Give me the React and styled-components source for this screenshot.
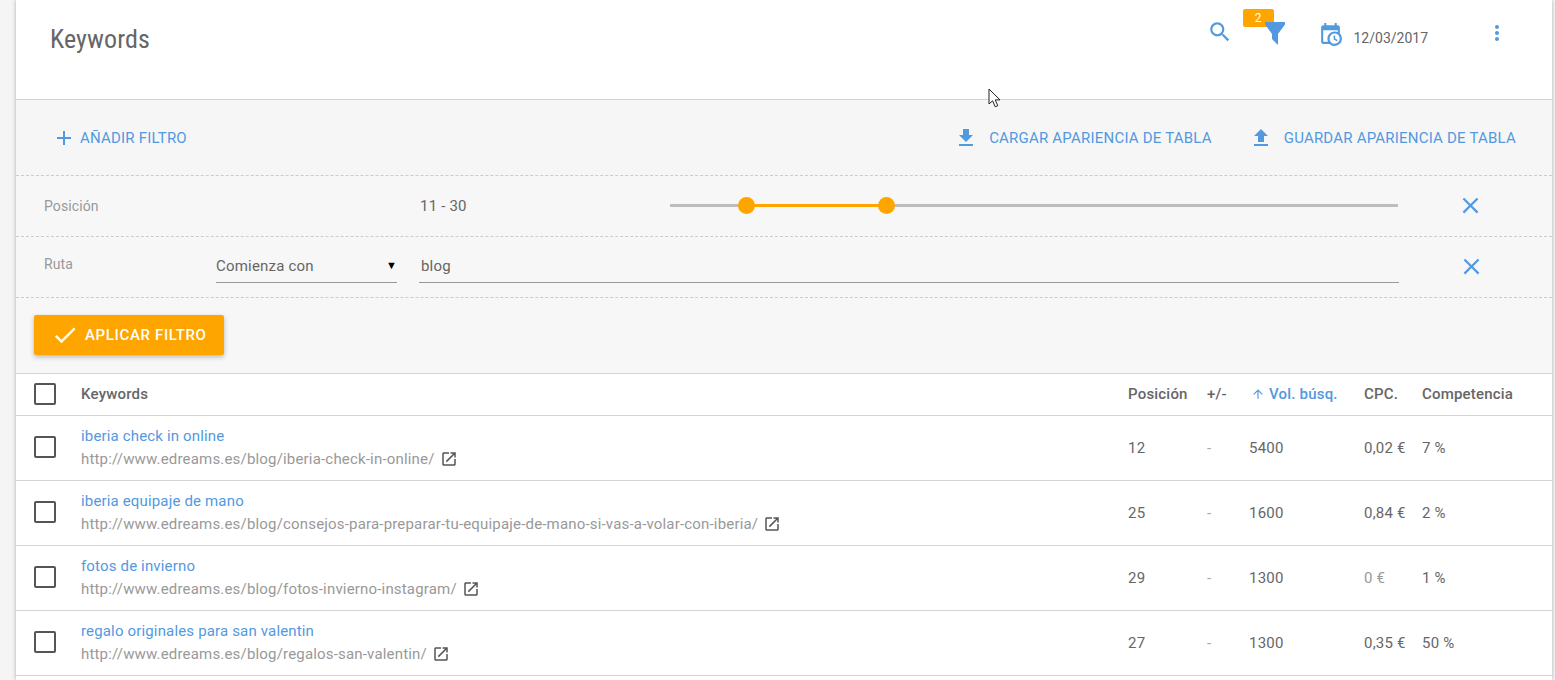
import React from 'react'
import styled, { createGlobalStyle } from 'styled-components'

const BLUE = '#5299e0'
const ORANGE = '#ffa500'

const paths = {
  search: 'M15.5 14h-.79l-.28-.27C15.41 12.59 16 11.11 16 9.5 16 5.91 13.09 3 9.5 3S3 5.91 3 9.5 5.91 16 9.5 16c1.61 0 3.09-.59 4.23-1.57l.27.28v.79l5 4.99L20.49 19l-4.99-5zm-6 0C7.01 14 5 11.99 5 9.5S7.01 5 9.5 5 14 7.01 14 9.5 11.99 14 9.5 14z',
  calendar: 'M15,13H16.5V15.82L18.94,17.23L18.19,18.53L15,16.69V13M19,8H5V19H9.67C9.24,18.09 9,17.07 9,16A7,7 0 0,1 16,9C17.07,9 18.09,9.24 19,9.67V8M5,21C3.89,21 3,20.1 3,19V5C3,3.89 3.89,3 5,3H6V1H8V3H16V1H18V3H19A2,2 0 0,1 21,5V11.1C22.24,12.36 23,14.09 23,16A7,7 0 0,1 16,23C14.09,23 12.36,22.24 11.1,21H5M16,11.15A4.85,4.85 0 0,0 11.15,16C11.15,18.68 13.32,20.85 16,20.85A4.85,4.85 0 0,0 20.85,16C20.85,13.32 18.68,11.15 16,11.15Z',
  more: 'M12 8c1.1 0 2-.9 2-2s-.9-2-2-2-2 .9-2 2 .9 2 2 2zm0 2c-1.1 0-2 .9-2 2s.9 2 2 2 2-.9 2-2-.9-2-2-2zm0 6c-1.1 0-2 .9-2 2s.9 2 2 2 2-.9 2-2-.9-2-2-2z',
  add: 'M19 13h-6v6h-2v-6H5v-2h6V5h2v6h6v2z',
  download: 'M19 9h-4V3H9v6H5l7 7 7-7zM5 18v2h14v-2H5z',
  upload: 'M9 16h6v-6h4l-7-7-7 7h4zm-4 2h14v2H5z',
  close: 'M19 6.41L17.59 5 12 10.59 6.41 5 5 6.41 10.59 12 5 17.59 6.41 19 12 13.41 17.59 19 19 17.59 13.41 12z',
  check: 'M9 16.17L4.83 12l-1.42 1.41L9 19 21 7l-1.41-1.41z',
  open: 'M19 19H5V5h7V3H5c-1.11 0-2 .9-2 2v14c0 1.1.89 2 2 2h14c1.1 0 2-.9 2-2v-7h-2v7zM14 3v2h3.59l-9.83 9.83 1.41 1.41L19 6.41V10h2V3h-7z',
  up: 'M4 12l1.41 1.41L11 7.83V20h2V7.83l5.58 5.59L20 12l-8-8-8 8z',
}

const Icon = ({ name, size = 24, color = BLUE }) => (
  <svg width={size} height={size} viewBox="0 0 24 24" fill={color} style={{ display: 'block', flex: 'none' }}>
    <path d={paths[name]} />
  </svg>
)

const rows = [
  { keyword: 'iberia check in online', url: 'http://www.edreams.es/blog/iberia-check-in-online/', pos: 12, vol: 5400, cpc: '0,02 €', comp: '7 %' },
  { keyword: 'iberia equipaje de mano', url: 'http://www.edreams.es/blog/consejos-para-preparar-tu-equipaje-de-mano-si-vas-a-volar-con-iberia/', pos: 25, vol: 1600, cpc: '0,84 €', comp: '2 %' },
  { keyword: 'fotos de invierno', url: 'http://www.edreams.es/blog/fotos-invierno-instagram/', pos: 29, vol: 1300, cpc: '0 €', comp: '1 %', zero: true },
  { keyword: 'regalo originales para san valentin', url: 'http://www.edreams.es/blog/regalos-san-valentin/', pos: 27, vol: 1300, cpc: '0,35 €', comp: '50 %' },
]

export default function App() {
  return (
    <>
      <GlobalStyle />
      <Card>
        <Header>
          <Title>Keywords</Title>
          <HeaderActions>
            <SearchSlot><Icon name="search" size={26} /></SearchSlot>
            <FilterSlot>
              <Badge>2</Badge>
              <Funnel width="20" height="23" viewBox="0 0 20 23">
                <path d="M0 0h20v2.5L13 12v11l-6-6v-5L0 2.5z" fill={BLUE} />
              </Funnel>
            </FilterSlot>
            <CalendarSlot>
              <Icon name="calendar" size={25} />
              <DateText>12/03/2017</DateText>
            </CalendarSlot>
            <MoreSlot><Icon name="more" /></MoreSlot>
          </HeaderActions>
        </Header>

        <Toolbar>
          <AddButton><Icon name="add" size={24} />AÑADIR FILTRO</AddButton>
          <ToolbarRight>
            <ToolButton><Icon name="download" size={24} />CARGAR APARIENCIA DE TABLA</ToolButton>
            <ToolButton><Icon name="upload" size={24} />GUARDAR APARIENCIA DE TABLA</ToolButton>
          </ToolbarRight>
        </Toolbar>

        <FilterRow>
          <RangeLabel>Posición</RangeLabel>
          <RangeValue>11 - 30</RangeValue>
          <Slider>
            <SliderFill $from={10.44} $to={29.75} />
            <Thumb $at={10.44} />
            <Thumb $at={29.75} />
          </Slider>
          <CloseSlot><Icon name="close" size={27} /></CloseSlot>
        </FilterRow>

        <FilterRow>
          <RouteLabel>Ruta</RouteLabel>
          <Select>Comienza con<Caret>▼</Caret></Select>
          <TextField>blog</TextField>
          <CloseSlot><Icon name="close" size={27} /></CloseSlot>
        </FilterRow>

        <ApplyBar>
          <ApplyButton><Icon name="check" size={28} color="#fff" />APLICAR FILTRO</ApplyButton>
        </ApplyBar>

        <HeadRow>
          <CheckCell><Checkbox /></CheckCell>
          <span>Keywords</span>
          <span>Posición</span>
          <span>+/-</span>
          <SortedHead><Icon name="up" size={14} />Vol. búsq.</SortedHead>
          <span>CPC.</span>
          <span>Competencia</span>
        </HeadRow>

        {rows.map((row) => (
          <Row key={row.keyword}>
            <RowCheckCell><Checkbox /></RowCheckCell>
            <KeywordCell>
              <KeywordLink>{row.keyword}</KeywordLink>
              <UrlLine>{row.url}<Icon name="open" size={18} color="#555" /></UrlLine>
            </KeywordCell>
            <span>{row.pos}</span>
            <Dash>-</Dash>
            <Volume>{row.vol}</Volume>
            <Cpc $zero={row.zero}>{row.cpc}</Cpc>
            <span>{row.comp}</span>
          </Row>
        ))}
      </Card>

      <Cursor width="16" height="21" viewBox="0 0 16 21">
        <path d="M1 1v15l3.6-3.2 2.6 6 2.6-1.1-2.6-5.8H12z" fill="#fff" stroke="#222" strokeWidth="1" />
      </Cursor>
    </>
  )
}

const GlobalStyle = createGlobalStyle`
  html, body {
    margin: 0;
    height: 680px;
    overflow: hidden;
    background: #f5f5f5;
    font-family: Roboto, "Liberation Sans", sans-serif;
  }
`

const Card = styled.main`
  width: 1536px;
  height: 680px;
  margin-left: 16px;
  background: #fff;
  box-shadow: 0 0 4px rgba(0, 0, 0, 0.3);
  overflow: hidden;
  color: #666;
`

const Header = styled.header`
  height: 100px;
  box-sizing: border-box;
  border-bottom: 1px solid #d4d4d4;
  display: flex;
  justify-content: space-between;
  align-items: flex-start;
`

const Title = styled.h1`
  margin: 24px 0 0 34px;
  font-family: "Roboto Condensed", Roboto, sans-serif;
  font-stretch: 75%;
  font-size: 26px;
  letter-spacing: 0.12px;
  line-height: 30px;
  font-weight: 400;
  color: #666;
`

const HeaderActions = styled.div`
  display: flex;
  align-items: flex-start;
  padding: 19px 43px 0 0;
`

const SearchSlot = styled.div`
  margin-right: 32px;
`

const FilterSlot = styled.div`
  position: relative;
  margin: 3px 33px 0 0;
`

const Badge = styled.span`
  position: absolute;
  left: -22px;
  top: -13px;
  width: 31px;
  height: 18px;
  border-radius: 2px;
  background: ${ORANGE};
  color: #fff;
  font-size: 12px;
  line-height: 18px;
  text-align: center;
`

const Funnel = styled.svg`
  position: relative;
  display: block;
`

const CalendarSlot = styled.div`
  display: flex;
  align-items: center;
  gap: 11px;
  margin-right: 57px;
  padding-top: 1px;
`

const DateText = styled.span`
  font-size: 14px;
  line-height: 20px;
  margin-top: 8px;
  color: #666;
`

const MoreSlot = styled.div`
  margin-top: 2px;
`

const Toolbar = styled.div`
  height: 76px;
  box-sizing: border-box;
  background: #f6f6f6;
  border-bottom: 1px dashed #ccc;
  display: flex;
  justify-content: space-between;
  align-items: center;
  padding: 0 36px 0 36px;
`

const ToolbarRight = styled.div`
  display: flex;
  gap: 37px;
`

const AddButton = styled.div`
  display: flex;
  align-items: center;
  gap: 4px;
  color: ${BLUE};
  font-size: 15px;
  letter-spacing: 0.2px;
`

const ToolButton = styled.div`
  display: flex;
  align-items: center;
  gap: 11px;
  color: ${BLUE};
  font-size: 15px;
  letter-spacing: 0.21px;
`

const FilterRow = styled.div`
  height: 61px;
  box-sizing: border-box;
  background: #f7f7f7;
  border-bottom: 1px dashed #ccc;
  display: flex;
  align-items: center;
  padding-left: 28px;
`

const RangeLabel = styled.span`
  width: 376px;
  font-size: 14px;
  letter-spacing: 0.1px;
  color: #999;
`

const RangeValue = styled.span`
  width: 250px;
  font-size: 15px;
  letter-spacing: 0.2px;
  color: #666;
`

const Slider = styled.div`
  position: relative;
  width: 728px;
  height: 3px;
  margin-top: -2px;
  background: #bdbdbd;
`

const SliderFill = styled.div`
  position: absolute;
  top: 0;
  bottom: 0;
  left: ${(p) => p.$from}%;
  right: ${(p) => 100 - p.$to}%;
  background: ${ORANGE};
`

const Thumb = styled.div`
  position: absolute;
  top: -7px;
  left: ${(p) => p.$at}%;
  width: 17px;
  height: 17px;
  margin-left: -8.5px;
  border-radius: 50%;
  background: ${ORANGE};
`

const CloseSlot = styled.div`
  width: 144px;
  margin-top: -2px;
  display: flex;
  justify-content: center;
`

const RouteLabel = styled.span`
  width: 172px;
  font-size: 14px;
  letter-spacing: 0.1px;
  color: #999;
  margin-top: -7px;
`

const Select = styled.div`
  width: 181px;
  height: 31px;
  box-sizing: border-box;
  margin-right: 22px;
  padding-bottom: 2px;
  border-bottom: 1px solid #999;
  display: flex;
  justify-content: space-between;
  align-items: center;
  font-size: 15px;
  letter-spacing: 0.2px;
  color: #666;
`

const Caret = styled.span`
  font-size: 11px;
  color: #000;
`

const TextField = styled.div`
  width: 980px;
  height: 31px;
  box-sizing: border-box;
  padding: 0 0 2px 2px;
  border-bottom: 1px solid #999;
  display: flex;
  align-items: center;
  font-size: 15px;
  letter-spacing: 0.2px;
  color: #666;
`

const ApplyBar = styled.div`
  height: 76px;
  box-sizing: border-box;
  background: #f7f7f7;
  border-bottom: 1px solid #d4d4d4;
  padding: 17px 0 0 18px;
`

const ApplyButton = styled.div`
  width: 190px;
  height: 40px;
  box-sizing: border-box;
  padding-left: 17px;
  border-radius: 2px;
  background: ${ORANGE};
  box-shadow: 0 2px 5px rgba(0, 0, 0, 0.26);
  display: flex;
  align-items: center;
  gap: 6px;
  color: #fff;
  font-size: 15px;
  font-weight: 500;
  letter-spacing: 0.65px;
`

const columns = '65px 1047px 79px 44px 113px 58px 1fr'

const HeadRow = styled.div`
  height: 42px;
  box-sizing: border-box;
  padding-bottom: 2px;
  border-bottom: 1px solid #d4d4d4;
  display: grid;
  grid-template-columns: ${columns};
  align-items: center;
  font-size: 15px;
  font-weight: 500;
  letter-spacing: 0.2px;
  color: #666;
`

const SortedHead = styled.span`
  display: flex;
  align-items: center;
  gap: 4px;
  color: ${BLUE};
`

const Row = styled.div`
  height: 65px;
  box-sizing: border-box;
  border-bottom: 1px solid #d4d4d4;
  display: grid;
  grid-template-columns: ${columns};
  align-items: center;
  font-size: 15px;
  letter-spacing: 0.2px;
  color: #666;
`

const CheckCell = styled.div`
  padding-left: 18px;
`

const RowCheckCell = styled(CheckCell)`
  margin-top: -2px;
`

const Checkbox = styled.div`
  width: 22px;
  height: 22px;
  box-sizing: border-box;
  border: 2px solid #555;
  border-radius: 2px;
`

const KeywordCell = styled.div`
  display: flex;
  flex-direction: column;
  gap: 5px;
  margin-top: -2px;
`

const KeywordLink = styled.span`
  color: ${BLUE};
  line-height: 18px;
  letter-spacing: 0.16px;
`

const UrlLine = styled.span`
  display: flex;
  align-items: center;
  gap: 5px;
  color: #999;
  line-height: 18px;
  letter-spacing: 0.18px;
`

const Dash = styled.span`
  color: #aaa;
`

const Volume = styled.span`
  margin-left: -2px;
`

const Cpc = styled.span`
  color: ${(p) => (p.$zero ? '#999' : '#666')};
`

const Cursor = styled.svg`
  position: absolute;
  left: 988px;
  top: 88px;
`
